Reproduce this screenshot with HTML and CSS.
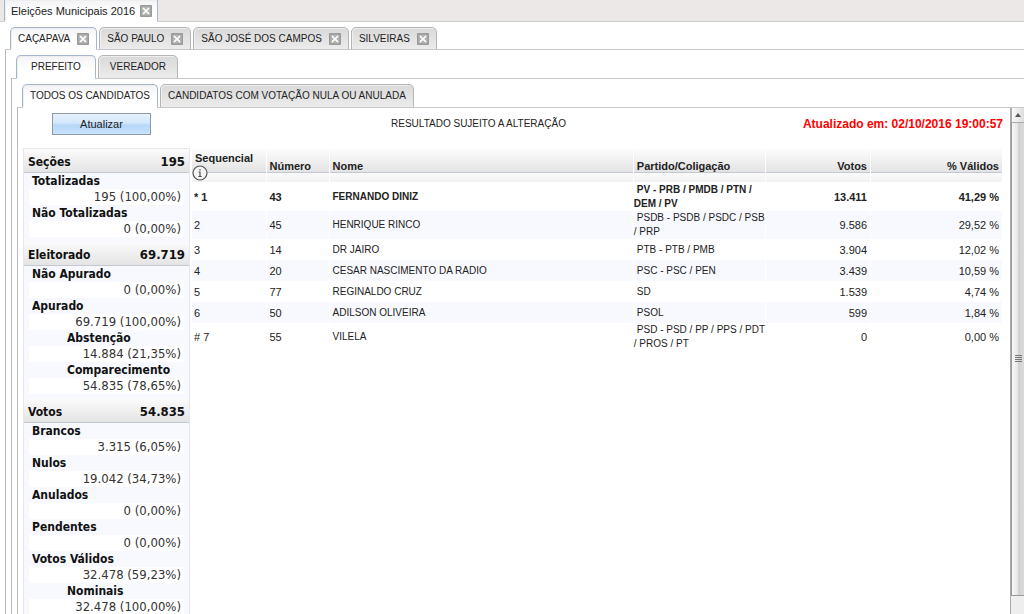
FILE: index.html
```html
<!DOCTYPE html>
<html lang="pt-BR">
<head>
<meta charset="utf-8">
<title>Eleições Municipais 2016</title>
<link rel="stylesheet" href="styles.css">
</head>
<body>
<svg class="defs" aria-hidden="true">
  <symbol id="close" viewBox="0 0 12 12">
    <rect width="12" height="12" rx="1" fill="#999"/>
    <rect x="1.5" y="1.5" width="9" height="9" fill="#b4b4b4"/>
    <path d="M3 3l6 6M9 3l-6 6" stroke="#fff" stroke-width="1.7"/>
  </symbol>
</svg>
<nav class="tabs tabs-window">
  <div class="tab active"><button class="label">Eleições Municipais 2016</button><button class="close" aria-label="Fechar"><svg><use href="#close"/></svg></button></div>
</nav>
<div class="panel panel-window">
  <nav class="tabs tabs-city">
    <div class="tab active"><button class="label">CAÇAPAVA</button><button class="close" aria-label="Fechar"><svg><use href="#close"/></svg></button></div>
    <div class="tab"><button class="label">SÃO PAULO</button><button class="close" aria-label="Fechar"><svg><use href="#close"/></svg></button></div>
    <div class="tab"><button class="label">SÃO JOSÉ DOS CAMPOS</button><button class="close" aria-label="Fechar"><svg><use href="#close"/></svg></button></div>
    <div class="tab"><button class="label">SILVEIRAS</button><button class="close" aria-label="Fechar"><svg><use href="#close"/></svg></button></div>
  </nav>
  <div class="panel">
    <nav class="tabs">
      <div class="tab wide active"><button class="label">PREFEITO</button></div>
      <div class="tab office"><button class="label">VEREADOR</button></div>
    </nav>
    <div class="panel">
      <nav class="tabs">
        <div class="tab active"><button class="label">TODOS OS CANDIDATOS</button></div>
        <div class="tab"><button class="label">CANDIDATOS COM VOTAÇÃO NULA OU ANULADA</button></div>
      </nav>
      <div class="panel result">
        <main class="content">
          <header class="bar">
            <button class="update">Atualizar</button>
            <span class="notice">RESULTADO SUJEITO A ALTERAÇÃO</span>
            <strong class="updated">Atualizado em: 02/10/2016 19:00:57</strong>
          </header>
          <div class="columns">
            <aside class="summary">
              <h2><span>Seções</span><span class="total">195</span></h2>
              <dl>
                <dt>Totalizadas</dt><dd>195 (100,00%)</dd>
                <dt>Não Totalizadas</dt><dd>0 (0,00%)</dd>
              </dl>
              <h2><span>Eleitorado</span><span class="total">69.719</span></h2>
              <dl>
                <dt>Não Apurado</dt><dd>0 (0,00%)</dd>
                <dt>Apurado</dt><dd>69.719 (100,00%)</dd>
                <dt class="sub">Abstenção</dt><dd>14.884 (21,35%)</dd>
                <dt class="sub">Comparecimento</dt><dd>54.835 (78,65%)</dd>
              </dl>
              <h2><span>Votos</span><span class="total">54.835</span></h2>
              <dl>
                <dt>Brancos</dt><dd>3.315 (6,05%)</dd>
                <dt>Nulos</dt><dd>19.042 (34,73%)</dd>
                <dt>Anulados</dt><dd>0 (0,00%)</dd>
                <dt>Pendentes</dt><dd>0 (0,00%)</dd>
                <dt>Votos Válidos</dt><dd>32.478 (59,23%)</dd>
                <dt class="sub">Nominais</dt><dd>32.478 (100,00%)</dd>
              </dl>
            </aside>
            <table class="candidates">
              <colgroup><col class="c-seq"><col class="c-num"><col class="c-name"><col class="c-party"><col class="c-votes"><col class="c-valid"></colgroup>
              <thead>
                <tr>
                  <th class="seq">Sequencial
                    <svg class="info" viewBox="0 0 16 16" aria-hidden="true"><circle cx="8" cy="8" r="7" fill="#f4f4f4" stroke="#555" stroke-width="1.2"/><path d="M8 4v1.6M6.5 7H8v4.5M6.3 11.5h3.4" fill="none" stroke="#555" stroke-width="1.2"/></svg>
                  </th>
                  <th>Número</th><th>Nome</th><th>Partido/Coligação</th><th class="num">Votos</th><th class="num">% Válidos</th>
                </tr>
              </thead>
              <tbody>
                <tr class="elected"><td>* 1</td><td>43</td><td>FERNANDO DINIZ</td><td>PV - PRB / PMDB / PTN /<br>DEM / PV</td><td>13.411</td><td>41,29 %</td></tr>
                <tr><td>2</td><td>45</td><td>HENRIQUE RINCO</td><td>PSDB - PSDB / PSDC / PSB<br>/ PRP</td><td>9.586</td><td>29,52 %</td></tr>
                <tr><td>3</td><td>14</td><td>DR JAIRO</td><td>PTB - PTB / PMB</td><td>3.904</td><td>12,02 %</td></tr>
                <tr><td>4</td><td>20</td><td>CESAR NASCIMENTO DA RADIO</td><td>PSC - PSC / PEN</td><td>3.439</td><td>10,59 %</td></tr>
                <tr><td>5</td><td>77</td><td>REGINALDO CRUZ</td><td>SD</td><td>1.539</td><td>4,74 %</td></tr>
                <tr><td>6</td><td>50</td><td>ADILSON OLIVEIRA</td><td>PSOL</td><td>599</td><td>1,84 %</td></tr>
                <tr><td># 7</td><td>55</td><td>VILELA</td><td>PSD - PSD / PP / PPS / PDT<br>/ PROS / PT</td><td>0</td><td>0,00 %</td></tr>
              </tbody>
            </table>
          </div>
        </main>
        <div class="scrollbar" aria-hidden="true">
          <div class="arrow"><svg viewBox="0 0 6 4"><path d="M0 4L3 0l3 4z" fill="#555"/></svg></div>
          <div class="thumb"><svg viewBox="0 0 7 8"><path d="M0 .5h7M0 2.5h7M0 4.5h7M0 6.5h7" stroke="#777"/></svg></div>
          <div class="track"></div>
        </div>
      </div>
    </div>
  </div>
</div>
</body>
</html>
```
FILE: styles.css
```css
* { box-sizing: border-box; }

body {
  margin: 0;
  height: 100vh;
  overflow: hidden;
  display: flex;
  flex-direction: column;
  background: #fff;
  color: #222;
  font: 11px/14px "Liberation Sans", Arial, sans-serif;
}

button {
  margin: 0;
  padding: 0;
  border: 0;
  background: none;
  color: inherit;
  font: inherit;
}

.defs { display: none; }

/* Tabs */
.tabs {
  display: flex;
  flex: none;
  gap: 2px;
  height: 24px;
  margin: 5px 0 -1px 4px;
  font-size: 10px;
}

.tabs-city {
  height: 23px;
  margin-left: 10px;
}

.tabs-window {
  height: 22px;
  margin: 0;
  padding-left: 4px;
  background: #ece8e7;
  border-bottom: 1px solid #ccc;
  font-size: 11px;
}

.tab {
  display: flex;
  align-items: center;
  gap: 7px;
  padding: 0 7px;
  border: 1px solid #b5b5b5;
  border-radius: 5px 5px 0 0;
  background: linear-gradient(#d9d9d9, #ececec);
  box-shadow: inset 1px 1px #eee;
  white-space: nowrap;
}

.tab.active {
  position: relative;
  border-color: #a5b6cf;
  border-bottom-color: #fff;
  background: linear-gradient(#f3f3f5, #fff 60%);
}

.tab.wide { padding: 0 14px; }

.tab.office { padding: 0 11px; }

.tabs-window .tab {
  gap: 5px;
  height: 22px;
  padding: 0 5px 0 6px;
  border-top: 0;
  border-radius: 0;
}

.close,
.close svg {
  display: block;
  width: 12px;
  height: 12px;
}

/* Nested panels */
.panel {
  flex: 1;
  min-height: 0;
  display: flex;
  flex-direction: column;
  margin-left: 5px;
  border-top: 1px solid #c4c7cc;
  border-left: 1px solid #bbb;
}

.panel-window {
  margin: 0;
  border: 0;
}

.panel .panel .tabs { margin-left: 10px; }

.result { flex-direction: row; }

.content {
  flex: 1;
  min-width: 0;
  overflow: hidden;
  padding: 4px 7px 0 5px;
}

.bar {
  display: grid;
  grid-template-columns: 1fr auto 1fr;
  align-items: center;
  height: 23px;
  margin-bottom: 13px;
  padding-left: 29px;
}

.update {
  justify-self: start;
  width: 99px;
  height: 22px;
  border: 1px solid #8f9aa8;
  background: linear-gradient(#e6f1fc, #d3e7fb 45%, #b5d7f9 55%, #c8e3fd);
}

.notice {
  margin-right: 98px;
  font-size: 10px;
}

.updated {
  justify-self: end;
  color: #f00;
  font-size: 12px;
}

.columns {
  display: flex;
  align-items: flex-start;
  gap: 2px;
}

/* Summary */
.summary {
  flex: none;
  width: 167px;
  border: 1px solid #e6e6ec;
  background: #f8f9ff;
  color: #333;
  font: 12px/16px "DejaVu Sans Condensed", Tahoma, sans-serif;
}

.summary h2 {
  display: flex;
  justify-content: space-between;
  align-items: center;
  height: 24px;
  margin: 0;
  padding: 2px 4px 0;
  border-bottom: 1px solid #c3c9d1;
  background: linear-gradient(#fbfbfb, #e4e4e4);
  color: #111;
  font-size: 12px;
}

.summary .total { font-size: 13px; }

.summary dl {
  margin: 0;
  padding: 0 5px 5px;
}

.summary dt {
  padding-left: 3px;
  color: #111;
  font-weight: bold;
}

.summary .sub { padding-left: 38px; }

.summary dd {
  margin: 0;
  padding-right: 3px;
  background: #fff;
  font-size: 13px;
  text-align: right;
}

/* Candidates */
.candidates {
  flex: 1;
  table-layout: fixed;
  border-collapse: collapse;
}

.c-seq { width: 74px; }
.c-num { width: 63px; }
.c-party { width: 132px; }
.c-votes { width: 105px; }
.c-valid { width: 132px; }

th {
  height: 34px;
  padding: 1px 3px 0;
  border-right: 1px solid #fff;
  background: linear-gradient(#fdfdfd, #e3e3e3 24px, #c3c9d1 24px, #c3c9d1 25px, #fafafa 25px, #f1f1f1);
  text-align: left;
}

.info {
  display: block;
  width: 16px;
  height: 16px;
  margin-left: -3px;
}

td {
  height: 21px;
  padding: 0 3px;
  border-right: 1px solid #fff;
  white-space: nowrap;
}

td:nth-child(1) { padding-left: 2px; }

td:nth-child(3),
td:nth-child(4) { font-size: 10px; }

td:nth-child(4) {
  padding: 0;
  text-indent: 3px;
}

.num,
td:nth-child(n + 5) {
  padding-right: 3px;
  text-align: right;
}

tbody tr:nth-child(even) { background: #f8f9ff; }

.elected td {
  height: 29px;
  font-weight: bold;
}

/* Scrollbar */
.scrollbar {
  flex: none;
  display: flex;
  flex-direction: column;
  width: 14px;
  border-left: 1px solid #aaa;
  background: #eee;
}

.arrow,
.thumb {
  display: flex;
  align-items: center;
  justify-content: center;
  border: 1px solid #aaa;
  border-width: 0 0 1px 1px;
}

.arrow {
  height: 15px;
  background: linear-gradient(90deg, #fafafa, #ddd);
}

.arrow svg { width: 6px; height: 4px; }

.thumb {
  flex: 1;
  border-color: #999;
  background: linear-gradient(90deg, #f6f6f6, #e8e8e8 45%, #cfd2d5 55%, #dadada);
}

.thumb svg { width: 7px; height: 8px; }

.track { height: 18px; }
```
